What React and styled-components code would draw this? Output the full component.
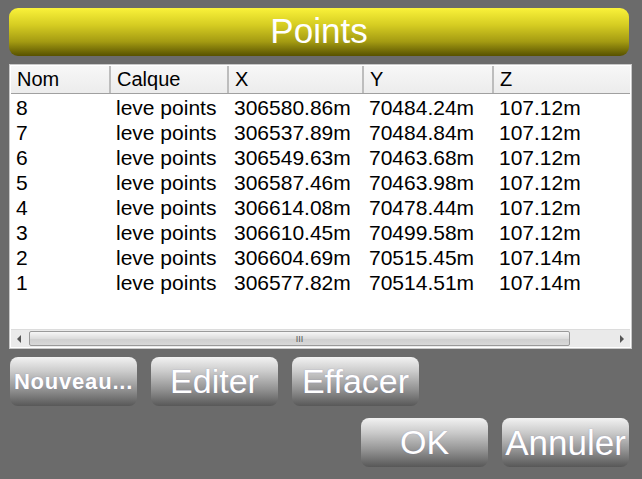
import React from "react";
import styled, { createGlobalStyle } from "styled-components";

const Global = createGlobalStyle`
  html, body {
    margin: 0;
    padding: 0;
    background: #6b6b6b;
  }
  body {
    font-family: "Liberation Sans", Arial, sans-serif;
  }
`;

const Dialog = styled.div`
  width: 642px;
  height: 479px;
  box-sizing: border-box;
  padding: 8px 11px 0 9px;
  display: flex;
  flex-direction: column;
`;

const TitleBar = styled.div`
  height: 48px;
  border-radius: 9px;
  background: linear-gradient(to bottom, #faf23a 0%, #d6cd22 35%, #a49b12 70%, #575100 100%);
  color: #fff;
  font-size: 35px;
  display: flex;
  align-items: center;
  justify-content: center;
  margin-right: 2px;
  padding-bottom: 2px;
  box-sizing: border-box;
`;

const ListBox = styled.div`
  margin-top: 8px;
  height: 285px;
  box-sizing: border-box;
  background: #fff;
  border: 1px solid #c8c8c8;
  display: flex;
  flex-direction: column;
  margin-right: -1px;
`;

const cols = "100px 118px 135px 130px 1fr";

const HeaderRow = styled.div`
  display: grid;
  grid-template-columns: ${cols};
  height: 27px;
  background: linear-gradient(to bottom, #f7f7f7, #ececec);
  border-bottom: 1px solid #a0a0a0;
  margin: 1px 1px 0 1px;
`;

const HeaderCell = styled.div`
  font-size: 20px;
  color: #000;
  padding-left: 6px;
  display: flex;
  align-items: center;
  border-right: ${(p) => (p.$last ? "none" : "2px solid #bdbdbd")};
`;

const Body = styled.div`
  flex: 1;
  padding-top: 1px;
`;

const Row = styled.div`
  display: grid;
  grid-template-columns: ${cols};
  height: 25px;
  align-items: center;
  margin: 0 1px;
`;

const Cell = styled.div`
  font-size: 21px;
  color: #000;
  padding-left: 5px;
  white-space: nowrap;
`;

const ScrollBar = styled.div`
  height: 17px;
  margin: 0 1px 1px 1px;
  background: #eaeaea;
  border-top: 1px solid #dcdcdc;
  display: flex;
  align-items: center;
  gap: 8px;
  padding: 0 6px;
`;

const Arrow = styled.div`
  width: 0;
  height: 0;
  border-top: 4px solid transparent;
  border-bottom: 4px solid transparent;
  ${(p) =>
    p.$dir === "left"
      ? "border-right: 4px solid #555;"
      : "border-left: 4px solid #555;"}
`;

const Track = styled.div`
  flex: 1;
  display: flex;
  align-items: center;
  padding-right: 42px;
`;

const Thumb = styled.div`
  flex: 1;
  height: 13px;
  border: 1px solid #9a9a9a;
  border-radius: 2px;
  background: linear-gradient(to bottom, #f6f6f6, #dcdcdc 50%, #cfcfcf 51%, #d8d8d8);
  display: flex;
  align-items: center;
  justify-content: center;
  font-size: 9px;
  color: #555;
`;

const ButtonRow = styled.div`
  display: flex;
  gap: 14px;
  justify-content: ${(p) => (p.$end ? "flex-end" : "flex-start")};
  margin-top: ${(p) => p.$top}px;
  padding-left: 1px;
  padding-right: ${(p) => (p.$end ? 2 : 0)}px;
`;

const Button = styled.div`
  width: 127px;
  height: 49px;
  box-sizing: border-box;
  border-radius: 8px;
  background: linear-gradient(to bottom, #f2f2f2 0%, #cacaca 30%, #949494 65%, #585858 100%);
  color: #fff;
  font-size: ${(p) => p.$size || 34}px;
  font-weight: ${(p) => (p.$bold ? 700 : 400)};
  letter-spacing: ${(p) => p.$spacing || 0}px;
  display: flex;
  align-items: center;
  justify-content: center;
  white-space: nowrap;
  text-shadow: 0 0 1px rgba(120, 120, 170, 0.7);
`;

const points = [
  ["8", "leve points", "306580.86m", "70484.24m", "107.12m"],
  ["7", "leve points", "306537.89m", "70484.84m", "107.12m"],
  ["6", "leve points", "306549.63m", "70463.68m", "107.12m"],
  ["5", "leve points", "306587.46m", "70463.98m", "107.12m"],
  ["4", "leve points", "306614.08m", "70478.44m", "107.12m"],
  ["3", "leve points", "306610.45m", "70499.58m", "107.12m"],
  ["2", "leve points", "306604.69m", "70515.45m", "107.14m"],
  ["1", "leve points", "306577.82m", "70514.51m", "107.14m"],
];

const headers = ["Nom", "Calque", "X", "Y", "Z"];

export default function App() {
  return (
    <>
      <Global />
      <Dialog>
        <TitleBar>Points</TitleBar>
        <ListBox>
          <HeaderRow>
            {headers.map((h, i) => (
              <HeaderCell key={h} $last={i === headers.length - 1}>
                {h}
              </HeaderCell>
            ))}
          </HeaderRow>
          <Body>
            {points.map((r) => (
              <Row key={r[0]}>
                {r.map((c, i) => (
                  <Cell key={i}>{c}</Cell>
                ))}
              </Row>
            ))}
          </Body>
          <ScrollBar>
            <Arrow $dir="left" />
            <Track>
              <Thumb>III</Thumb>
            </Track>
            <Arrow $dir="right" />
          </ScrollBar>
        </ListBox>
        <ButtonRow $top={8}>
          <Button $size={22} $bold $spacing={0.8}>Nouveau...</Button>
          <Button>Editer</Button>
          <Button>Effacer</Button>
        </ButtonRow>
        <ButtonRow $top={12} $end>
          <Button $size={34}>OK</Button>
          <Button $size={35}>Annuler</Button>
        </ButtonRow>
      </Dialog>
    </>
  );
}
